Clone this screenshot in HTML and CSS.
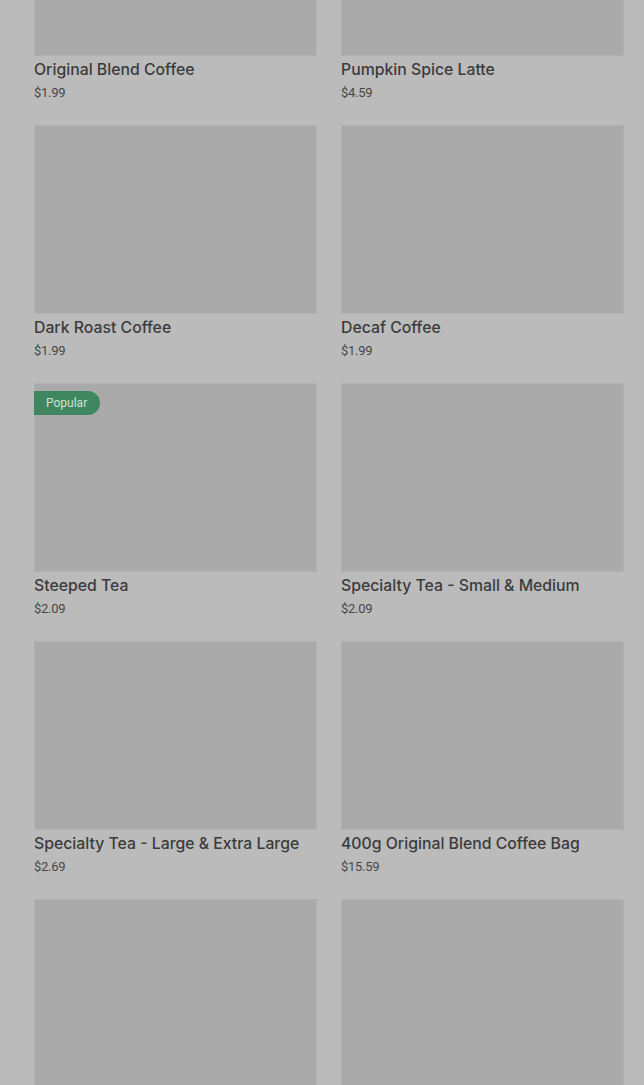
FILE: index.html
```html
<!DOCTYPE html>
<html lang="en">
  <head>
    <meta charset="UTF-8" />
    <meta name="viewport" content="width=device-width, initial-scale=1.0" />
    <title>Menu</title>
    <link rel="stylesheet" href="styles.css">
  </head>
  <body>
    <div class="menu-grid">
      <div class="item">
        <div class="thumb"></div>
        <h3>Original Blend Coffee</h3>
        <p class="price">$1.99</p>
      </div>
      <div class="item">
        <div class="thumb"></div>
        <h3>Pumpkin Spice Latte</h3>
        <p class="price">$4.59</p>
      </div>
      <div class="item">
        <div class="thumb"></div>
        <h3>Dark Roast Coffee</h3>
        <p class="price">$1.99</p>
      </div>
      <div class="item">
        <div class="thumb"></div>
        <h3>Decaf Coffee</h3>
        <p class="price">$1.99</p>
      </div>
      <div class="item">
        <div class="thumb">
          <span class="badge">Popular</span>
        </div>
        <h3>Steeped Tea</h3>
        <p class="price">$2.09</p>
      </div>
      <div class="item">
        <div class="thumb"></div>
        <h3>Specialty Tea - Small &amp; Medium</h3>
        <p class="price">$2.09</p>
      </div>
      <div class="item">
        <div class="thumb"></div>
        <h3>Specialty Tea - Large &amp; Extra Large</h3>
        <p class="price">$2.69</p>
      </div>
      <div class="item">
        <div class="thumb"></div>
        <h3>400g Original Blend Coffee Bag</h3>
        <p class="price">$15.59</p>
      </div>
      <!-- next row, still loading -->
      <div class="item">
        <div class="thumb"></div>
      </div>
      <div class="item">
        <div class="thumb"></div>
      </div>
    </div>
  </body>
</html>
```

FILE: styles.css
```css
* {
  margin: 0;
  padding: 0;
  box-sizing: border-box;
}

body {
  background: #bbbbbb;
  font-family: Inter, Roboto, sans-serif;
  overflow: hidden;
}

.menu-grid {
  display: grid;
  grid-template-columns: 283px 283px;
  column-gap: 24px;
  row-gap: 23px;
  padding: 0 20px 0 34px;
  margin-top: -133px;
}

.thumb {
  position: relative;
  height: 189px;
  background: #aaaaaa;
  border: 1px solid #b1b1b1;
}

.badge {
  position: absolute;
  top: 7px;
  left: -1px;
  background: #3e8760;
  color: #cfe2d6;
  font-family: Roboto, sans-serif;
  font-size: 12px;
  line-height: 24px;
  padding: 0 13px 0 12px;
  border-radius: 0 12px 12px 0;
}

.item h3 {
  font-size: 15.8px;
  font-weight: 500;
  color: #3b3b3b;
  line-height: 22px;
  margin-top: 3px;
}

.price {
  font-family: Roboto, sans-serif;
  font-size: 13px;
  color: #474747;
  line-height: 18px;
  margin-top: 3px;
  letter-spacing: -0.3px;
}
```
